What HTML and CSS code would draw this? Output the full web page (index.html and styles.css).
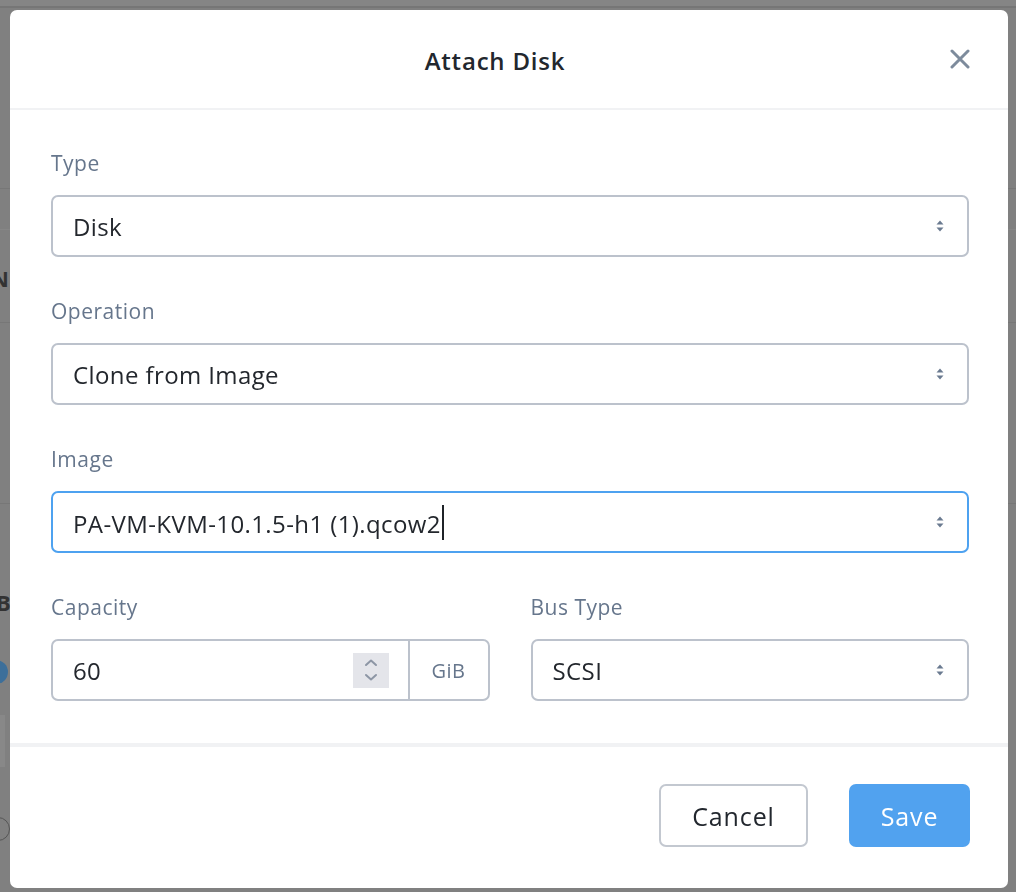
FILE: index.html
```html
<!DOCTYPE html>
<html lang="en">
<head>
<meta charset="utf-8">
<title>Attach Disk</title>
<link rel="stylesheet" href="styles.css">
</head>
<body>
<div class="page">
  <div class="bg-top"></div>
  <div class="bg-row bg-r1"></div>
  <div class="bg-row bg-r2"></div>
  <div class="bg-row bg-r3"><span class="bg-glyph">N</span></div>
  <div class="bg-row bg-r4"></div>
  <div class="bg-side">
    <span class="bg-glyph bg-b">B4</span>
    <span class="bg-dot"></span>
    <span class="bg-rect"></span>
    <span class="bg-radio"></span>
  </div>
</div>

<div class="overlay">
  <div class="modal">
    <div class="modal-header">
      <span></span>
      <h1 class="modal-title">Attach Disk</h1>
      <button class="close-btn" aria-label="Close">
        <svg width="20" height="20" viewBox="0 0 20 20"><path d="M2 2 L18 18 M18 2 L2 18" stroke="#7d8b9c" stroke-width="3" stroke-linecap="round" fill="none"/></svg>
      </button>
    </div>

    <div class="modal-body">
      <div class="field">
        <label class="field-label">Type</label>
        <div class="select">
          <span class="select-value">Disk</span>
          <svg class="select-arrows" width="10" height="14" viewBox="0 0 10 14"><path d="M1.5 5.5 L5 1.5 L8.5 5.5 Z M1.5 8.5 L5 12.5 L8.5 8.5 Z" fill="#6a7a90"/></svg>
        </div>
      </div>

      <div class="field">
        <label class="field-label">Operation</label>
        <div class="select">
          <span class="select-value">Clone from Image</span>
          <svg class="select-arrows" width="10" height="14" viewBox="0 0 10 14"><path d="M1.5 5.5 L5 1.5 L8.5 5.5 Z M1.5 8.5 L5 12.5 L8.5 8.5 Z" fill="#6a7a90"/></svg>
        </div>
      </div>

      <div class="field">
        <label class="field-label">Image</label>
        <div class="select select-focus">
          <span class="select-value">PA-VM-KVM-10.1.5-h1 (1).qcow2<span class="caret"></span></span>
          <svg class="select-arrows" width="10" height="14" viewBox="0 0 10 14"><path d="M1.5 5.5 L5 1.5 L8.5 5.5 Z M1.5 8.5 L5 12.5 L8.5 8.5 Z" fill="#6a7a90"/></svg>
        </div>
      </div>

      <div class="field-row">
        <div class="field">
          <label class="field-label">Capacity</label>
          <div class="input-group">
            <div class="number-input">
              <span class="select-value">60</span>
              <span class="spinner">
                <svg width="16" height="28" viewBox="0 0 16 28"><path d="M3 9 L8 4.5 L13 9 M3 19 L8 23.5 L13 19" stroke="#8d96a5" stroke-width="2" fill="none" stroke-linecap="round" stroke-linejoin="round"/></svg>
              </span>
            </div>
            <span class="addon">GiB</span>
          </div>
        </div>
        <div class="field">
          <label class="field-label">Bus Type</label>
          <div class="select">
            <span class="select-value">SCSI</span>
            <svg class="select-arrows" width="10" height="14" viewBox="0 0 10 14"><path d="M1.5 5.5 L5 1.5 L8.5 5.5 Z M1.5 8.5 L5 12.5 L8.5 8.5 Z" fill="#6a7a90"/></svg>
          </div>
        </div>
      </div>
    </div>

    <div class="modal-footer">
      <button class="btn btn-cancel">Cancel</button>
      <button class="btn btn-save">Save</button>
    </div>
  </div>
</div>
</body>
</html>
```

FILE: styles.css
```css
* { box-sizing: border-box; }

html, body {
  margin: 0;
  padding: 0;
  height: 100%;
}

body {
  background: #808080;
  font-family: "Open Sans", "Liberation Sans", sans-serif;
  overflow: hidden;
}

/* dimmed page behind the modal */
.page {
  display: flex;
  flex-direction: column;
}
.bg-top {
  height: 8px;
  background: #858585;
  border-bottom: 2px solid #767676;
}
.bg-row { border-bottom: 1px solid #777777; }
.bg-r1 { height: 181px; }
.bg-r2 { height: 41px; border-bottom-color: #868686; }
.bg-r3 {
  height: 93px;
  display: flex;
  align-items: center;
  padding-top: 4px;
}
.bg-r4 { height: 181px; }
.bg-glyph {
  font-weight: 700;
  font-size: 22px;
  color: #333333;
  margin-left: -9px;
  line-height: 24px;
}
.bg-side {
  display: flex;
  flex-direction: column;
  align-items: flex-start;
}
.bg-b { margin-top: 86px; margin-left: -4px; }
.bg-dot {
  width: 24px;
  height: 24px;
  border-radius: 50%;
  background: #3d6f9a;
  margin-left: -16px;
  margin-top: 46px;
}
.bg-rect {
  width: 5px;
  height: 52px;
  background: #888888;
  margin-top: 31px;
}
.bg-radio {
  width: 24px;
  height: 24px;
  border-radius: 50%;
  border: 1.5px solid #555555;
  margin-left: -14px;
  margin-top: 50px;
}

/* overlay & modal */
.overlay {
  position: fixed;
  inset: 0;
  padding: 10px 8px 4px 10px;
  display: flex;
}
.modal {
  flex: 1;
  background: #ffffff;
  border-radius: 7px;
  display: flex;
  flex-direction: column;
}

.modal-header {
  height: 100px;
  border-bottom: 2px solid #f1f2f4;
  display: grid;
  grid-template-columns: 1fr auto 1fr;
  align-items: center;
  padding: 3px 38px 0 38px;
}
.modal-title {
  margin: 0 28px 0 0;
  font-size: 24px;
  font-weight: 600;
  color: #22272e;
  letter-spacing: 0.8px;
}
.close-btn {
  justify-self: end;
  border: none;
  background: none;
  padding: 0;
  margin-top: -4px;
  width: 20px;
  height: 20px;
  display: flex;
}

.modal-body {
  padding: 40px 39px 42px 41px;
  display: flex;
  flex-direction: column;
  gap: 41px;
}

.field {
  display: flex;
  flex-direction: column;
  gap: 21px;
}
.field-label {
  font-size: 21px;
  line-height: 24px;
  color: #66768c;
  letter-spacing: 0.5px;
  margin-top: 1px;
  margin-bottom: -1px;
}

.select {
  height: 62px;
  border: 2px solid #bcc2cc;
  border-radius: 7px;
  display: flex;
  align-items: center;
  justify-content: space-between;
  padding: 0 22px 0 20px;
}
.select-focus { border-color: #4ea2f0; }
.select-value {
  font-size: 24px;
  color: #23272d;
  white-space: nowrap;
  letter-spacing: 0.4px;
}
.caret {
  display: inline-block;
  width: 2px;
  height: 35px;
  background: #1f2328;
  vertical-align: -7px;
  margin-left: 1px;
}

.field-row {
  display: grid;
  grid-template-columns: 1fr 1fr;
  gap: 41px;
}

.input-group {
  height: 62px;
  border: 2px solid #bcc2cc;
  border-radius: 7px;
  display: flex;
}
.number-input {
  flex: 1;
  display: flex;
  align-items: center;
  justify-content: space-between;
  padding: 0 19px 0 20px;
  border-right: 2px solid #bcc2cc;
}
.spinner {
  width: 36px;
  height: 35px;
  background: #e4e5ea;
  display: flex;
  align-items: center;
  justify-content: center;
}
.addon {
  width: 78px;
  display: flex;
  align-items: center;
  justify-content: center;
  font-size: 20px;
  color: #66768c;
  letter-spacing: 0.5px;
}

.modal-footer {
  border-top: 4px solid #f1f2f4;
  padding: 37px 38px 41px 0;
  display: flex;
  justify-content: flex-end;
  gap: 41px;
}
.btn {
  height: 63px;
  border-radius: 7px;
  font-family: inherit;
  font-size: 25px;
  letter-spacing: 0.9px;
  padding: 0;
}
.btn-cancel {
  width: 149px;
  border: 2px solid #c3c8d0;
  background: #ffffff;
  color: #22272e;
}
.btn-save {
  width: 121px;
  border: none;
  background: #51a2ef;
  color: #ffffff;
}
```
